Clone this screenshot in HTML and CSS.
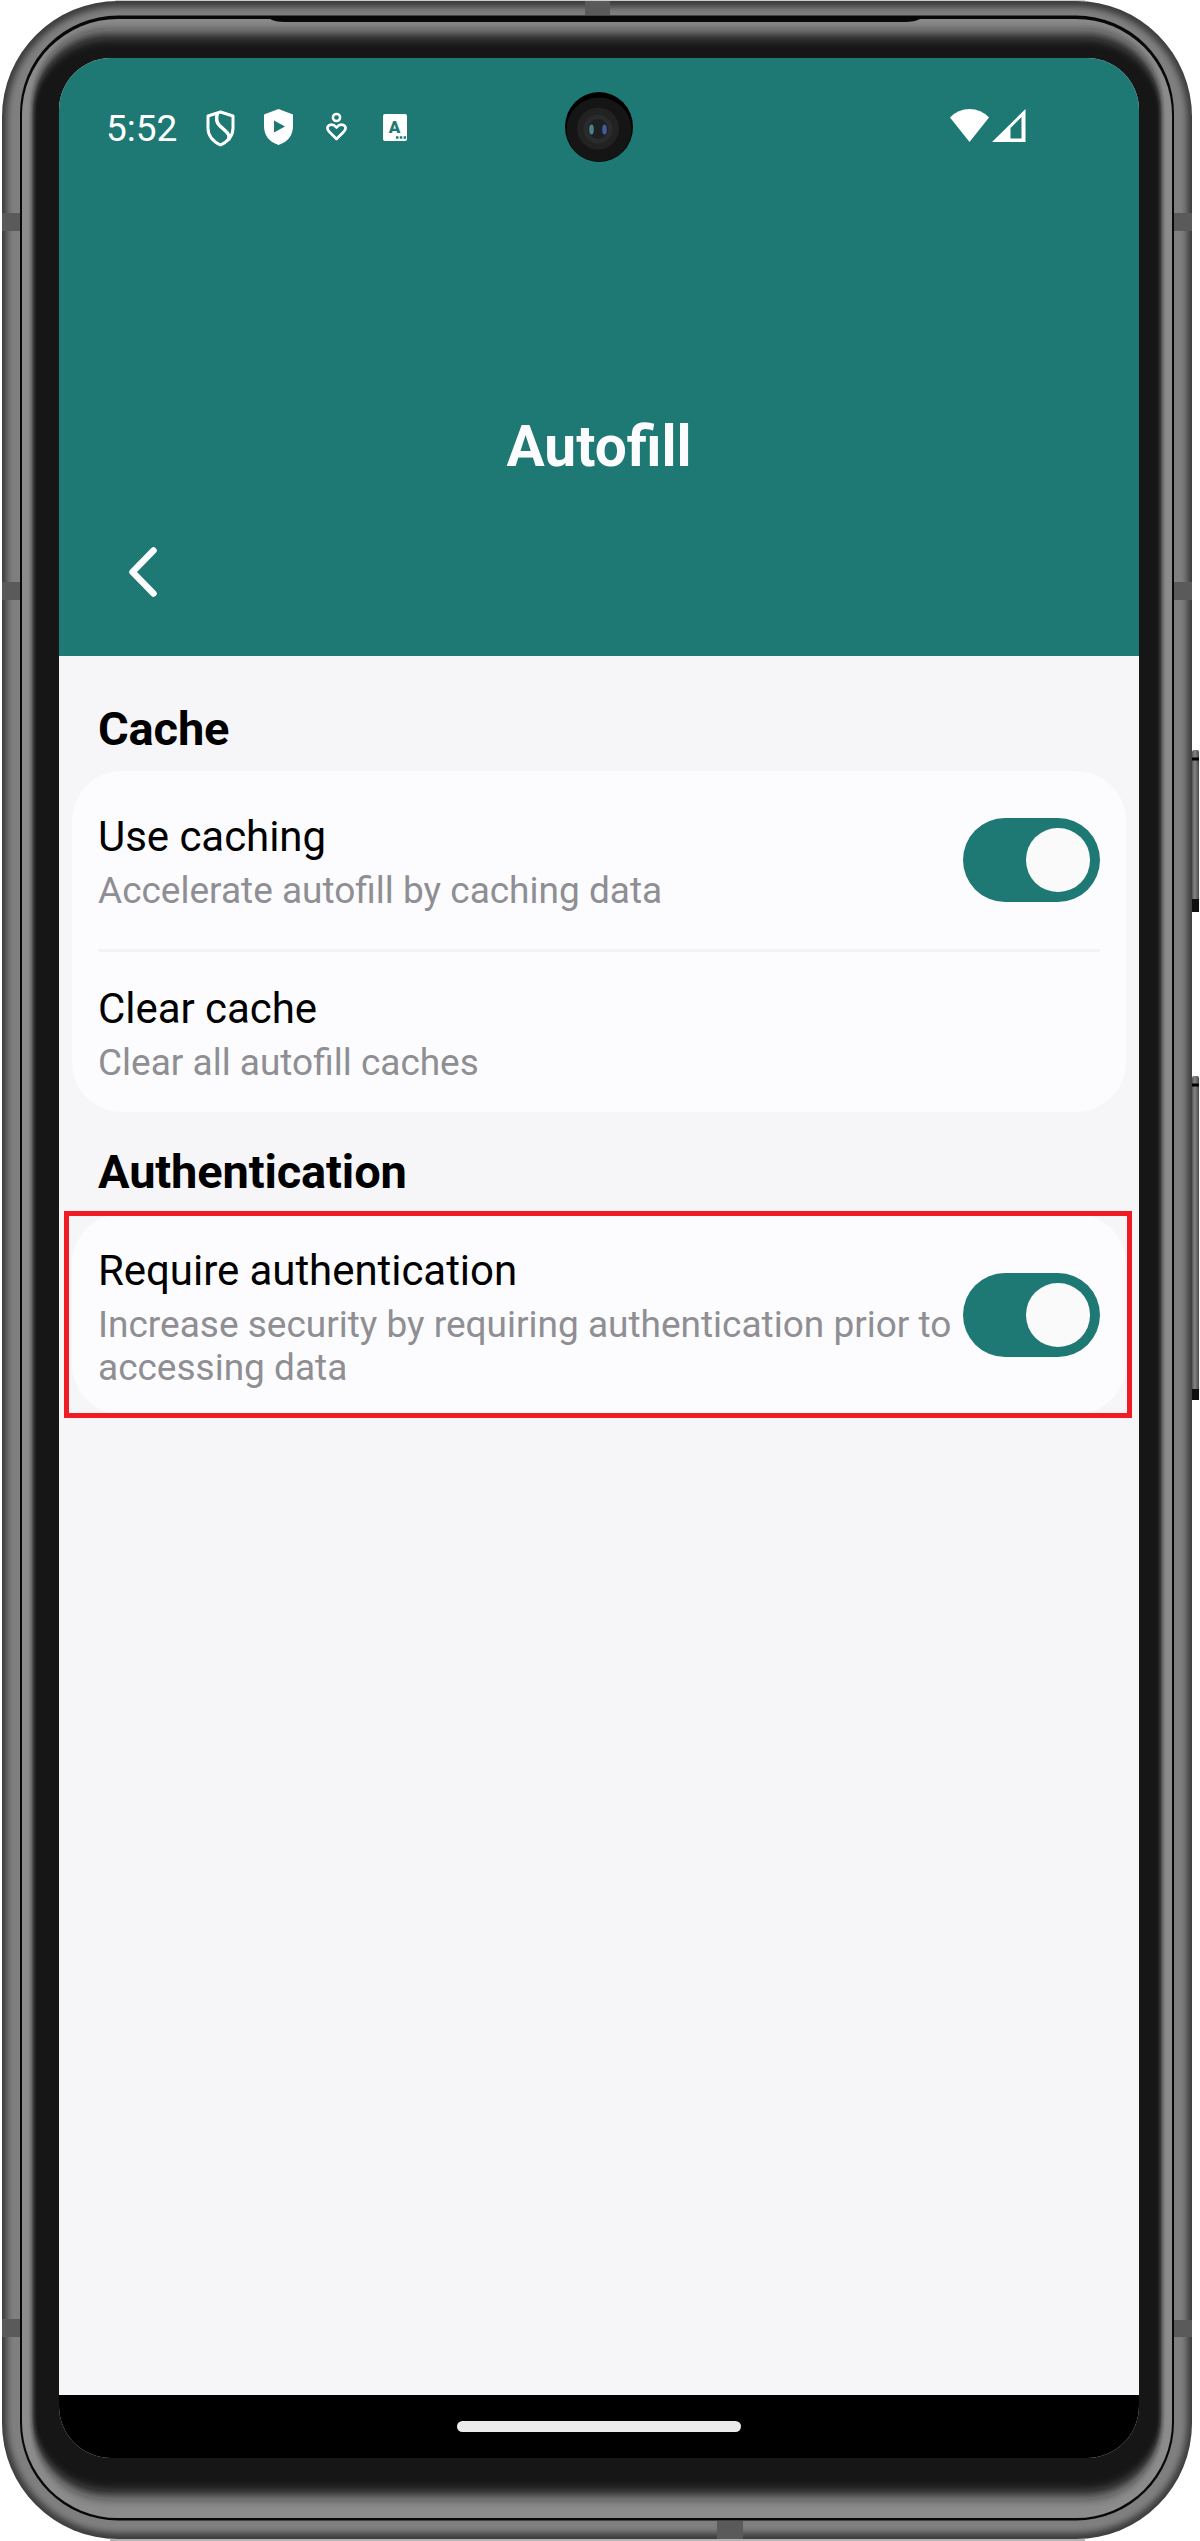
FILE: index.html
```html
<!DOCTYPE html>
<html lang="en">
<head>
<meta charset="utf-8">
<title>Autofill</title>
<link rel="stylesheet" href="styles.css">
</head>
<body>
<div class="phone">
  <svg class="frame" viewBox="0 0 1200 2541" aria-hidden="true">
    <defs>
      <filter id="soft-rim" x="-5%" y="-5%" width="110%" height="110%"><feGaussianBlur stdDeviation="3"/></filter>
      <filter id="soft-glass" x="-5%" y="-5%" width="110%" height="110%"><feGaussianBlur stdDeviation="2 7"/></filter>
      <clipPath id="rim"><rect x="2" y="1" width="1190" height="2538" rx="116"/></clipPath>
      <clipPath id="glass"><rect x="22" y="19" width="1150" height="2499" rx="96"/></clipPath>
      <linearGradient id="key" x1="0" x2="1" y1="0" y2="0"><stop offset="0" stop-color="#555"/><stop offset=".4" stop-color="#858585"/><stop offset="1" stop-color="#4a4a4a"/></linearGradient>
    </defs>
    <path d="M115 .5H1085" stroke="#c8cec9"/>
    <path d="M110 2540H1085" stroke="#b5b5b5" stroke-width="2"/>
    <g>
      <rect x="1192" y="750" width="7" height="162" rx="2" fill="url(#key)"/>
      <path d="M1192 759h7" stroke="#000" stroke-width="3"/>
      <path d="M1192 899h7v13h-7z" fill="#101010"/>
      <rect x="1192" y="1076" width="7" height="324" rx="2" fill="url(#key)"/>
      <path d="M1192 1085h7" stroke="#000" stroke-width="3"/>
      <path d="M1192 1389h7v11h-7z" fill="#101010"/>
    </g>
    <g clip-path="url(#rim)">
      <rect width="1200" height="2541" fill="#3c3c3c"/>
      <rect x="7" y="7" width="1180" height="2526" rx="111" fill="#7f7f7f" filter="url(#soft-rim)"/>
      <g fill="#5a5a5a">
        <path d="M2 213h18v18H2zM2 582h18v18H2zM2 2319h18v18H2z"/>
        <path d="M1174 213h18v18h-18zM1174 582h18v18h-18zM1174 2320h18v17h-18z"/>
        <path d="M585 1h25v14h-25zM717 2521h26v18h-26z"/>
      </g>
    </g>
    <rect x="20" y="15.500" width="1154" height="2505" rx="98" fill="#080808"/>
    <g clip-path="url(#glass)">
      <rect x="22" y="19" width="1150" height="2499" fill="#8c8c8c"/>
      <rect x="32.500" y="34" width="1129" height="2461" rx="76" fill="#141414" filter="url(#soft-glass)"/>
      <path d="M270 19q5 3 15 3h620q10 0 15-3z" fill="#080808"/>
    </g>
  </svg>

  <div class="screen">
    <header class="header">
      <div class="status">
        <span class="clock">5:52</span>
        <svg class="status-icons" viewBox="0 0 210 40" aria-hidden="true">
          <path d="M21.500 4 34 8v12q0 11-12.500 17Q9 31 9 20V8z" fill="none" stroke="#fff" stroke-width="3" stroke-linejoin="round"/>
          <path d="M18.500 5Q16 13 20.500 17.500l6 5.500q5 4 3 9" fill="none" stroke="#fff" stroke-width="3.500"/>
          <path d="M79.500 1 94 6.500V18q0 14-14.500 19Q65 32 65 18V6.500z" fill="#fff"/>
          <path d="M75 12.500v12l11-6z" fill="#1e7873"/>
          <circle cx="137.500" cy="9.500" r="3.600" fill="none" stroke="#fff" stroke-width="2.500"/>
          <path d="m137.500 31-7.500-7.500c-5-6 3-9.500 7.500-4 4.500-5.500 12.500-2 7.500 4z" fill="none" stroke="#fff" stroke-width="2.700" stroke-linejoin="round"/>
          <rect x="184" y="6" width="24" height="27" rx="2" fill="#fff"/>
          <text class="glyph" x="195.500" y="25">A</text>
          <path d="M197 28.200h2.500v2.500H197zM200.800 28.200h2.500v2.500h-2.500zM204.600 28.200h2.500v2.500h-2.500z" fill="#1e7873"/>
        </svg>
        <svg class="camera" viewBox="0 0 68 70" aria-hidden="true">
          <ellipse cx="34" cy="35" rx="34" ry="35" fill="#000"/>
          <ellipse cx="34" cy="37.500" rx="32.500" ry="32" fill="#151515"/>
          <ellipse cx="33" cy="36.500" rx="21" ry="21" fill="#222"/>
          <circle cx="33" cy="37" r="14.500" fill="#292b2c"/>
          <circle cx="33" cy="37" r="10" fill="#1c2023"/>
          <ellipse cx="26.500" cy="37.500" rx="2.300" ry="5" fill="#4c8189"/>
          <ellipse cx="39.500" cy="37.500" rx="2.300" ry="5" fill="#465a9c"/>
        </svg>
        <svg class="signal" viewBox="0 0 76 33" aria-hidden="true">
          <path d="M0 8.500Q8 0 19.500 0T39 8.500L19.500 33z" fill="#fff"/>
          <path d="M42 33 75.500 0v33zM60.500 29.500h11V8l-11 11z" fill="#fff" fill-rule="evenodd"/>
        </svg>
      </div>
      <h1 class="title">Autofill</h1>
      <svg class="back" viewBox="0 0 30 52" aria-label="Back"><path d="M25.500 4.500 4.500 26l21 21.500" fill="none" stroke="#fcfcfe" stroke-width="6.500" stroke-linecap="round" stroke-linejoin="round"/></svg>
    </header>

    <main class="settings">
      <h2 class="section">Cache</h2>
      <div class="card">
        <div class="row row-first">
          <div class="label">
            <div class="name">Use caching</div>
            <div class="hint">Accelerate autofill by caching data</div>
          </div>
          <div class="switch"><div class="knob"></div></div>
        </div>
        <div class="divider"></div>
        <div class="row row-last">
          <div class="label">
            <div class="name">Clear cache</div>
            <div class="hint">Clear all autofill caches</div>
          </div>
        </div>
      </div>
      <h2 class="section">Authentication</h2>
      <div class="highlight">
        <div class="card">
          <div class="row row-single">
            <div class="label">
              <div class="name">Require authentication</div>
              <div class="hint">Increase security by requiring authentication prior to<br>accessing data</div>
            </div>
            <div class="switch"><div class="knob"></div></div>
          </div>
        </div>
      </div>
    </main>

    <footer class="nav"><div class="handle"></div></footer>
  </div>
</div>
</body>
</html>
```

FILE: styles.css
```css
* { box-sizing: border-box; }

body {
  margin: 0;
  background: #fff;
  font-family: Roboto, "Liberation Sans", sans-serif;
}

.phone {
  display: grid;
  width: 1200px;
  height: 2541px;
}

.frame,
.screen { grid-area: 1 / 1; }

.frame {
  display: block;
  width: 1200px;
  height: 2541px;
}

.screen {
  z-index: 1;
  display: flex;
  flex-direction: column;
  width: 1080px;
  height: 2400px;
  margin: 58px 0 0 59px;
  border-radius: 52px;
  overflow: hidden;
  background: #f6f6f8;
}

.header {
  display: flex;
  flex-direction: column;
  height: 598px;
  background: #1e7873;
  color: #fcfcfe;
}

.status {
  display: grid;
  grid-template-columns: 95px 362px 386px 76px;
  height: 140px;
  padding: 34px 0 0 47px;
  align-items: start;
}

.clock {
  padding-top: 15px;
  font-size: 37px;
  line-height: 43px;
  color: #fff;
}

.status-icons {
  width: 210px;
  height: 40px;
  margin-top: 16px;
  margin-left: -2px;
}

.glyph {
  font: 900 17px Roboto, sans-serif;
  text-anchor: middle;
  fill: #1e7873;
}

.camera { width: 68px; height: 70px; margin-left: 2px; }

.signal { width: 76px; height: 33px; margin: 17px 0 0 1px; }

.title {
  margin: 214px 0 0;
  font-size: 58px;
  font-weight: 700;
  line-height: 68px;
  text-align: center;
  transform: scaleX(0.98);
}

.back {
  width: 30px;
  height: 52px;
  margin: 66px 0 0 69px;
}

.settings { flex: 1; padding-top: 44px; }

.section {
  height: 58px;
  margin: 0;
  padding: 0 39px;
  font-size: 47px;
  font-weight: 700;
  letter-spacing: -0.15px;
  line-height: 57px;
  color: #000;
}

.card {
  margin: 13px 13px 31px;
  border-radius: 50px;
  background: #fcfcfe;
}

.row {
  display: flex;
  justify-content: space-between;
  padding: 0 26px;
}

.row-first { height: 178px; padding-top: 40px; }
.row-last { height: 160px; padding-top: 31px; }
.row-single { height: 200px; padding-top: 31px; }

.divider { height: 3px; margin: 0 26px; background: #f3f3f5; }

.label { white-space: nowrap; }

.name {
  margin-bottom: 6px;
  font-size: 42px;
  letter-spacing: -0.05px;
  line-height: 52px;
  color: #000;
}

.hint {
  font-size: 37px;
  line-height: 43px;
  color: #8e8e93;
}

.switch {
  flex: none;
  width: 137px;
  height: 84px;
  margin-top: 7px;
  padding: 10px 10.500px;
  border-radius: 42px;
  background: #1e7873;
}

.row-single .switch { margin-top: 28px; }

.knob {
  width: 63.500px;
  height: 63.500px;
  margin-left: auto;
  border-radius: 50%;
  background: #fafafa;
}

.highlight {
  width: 1068px;
  height: 207px;
  margin: 10px 0 0 5px;
  border: 5px solid #ef1c24;
  overflow: hidden;
}

.highlight .card { margin: -2px 1px 0 3px; }

.nav {
  display: flex;
  justify-content: center;
  height: 63px;
  padding-top: 26px;
  background: #000;
}

.handle {
  width: 284px;
  height: 11px;
  border-radius: 6px;
  background: #ebebeb;
}
```
